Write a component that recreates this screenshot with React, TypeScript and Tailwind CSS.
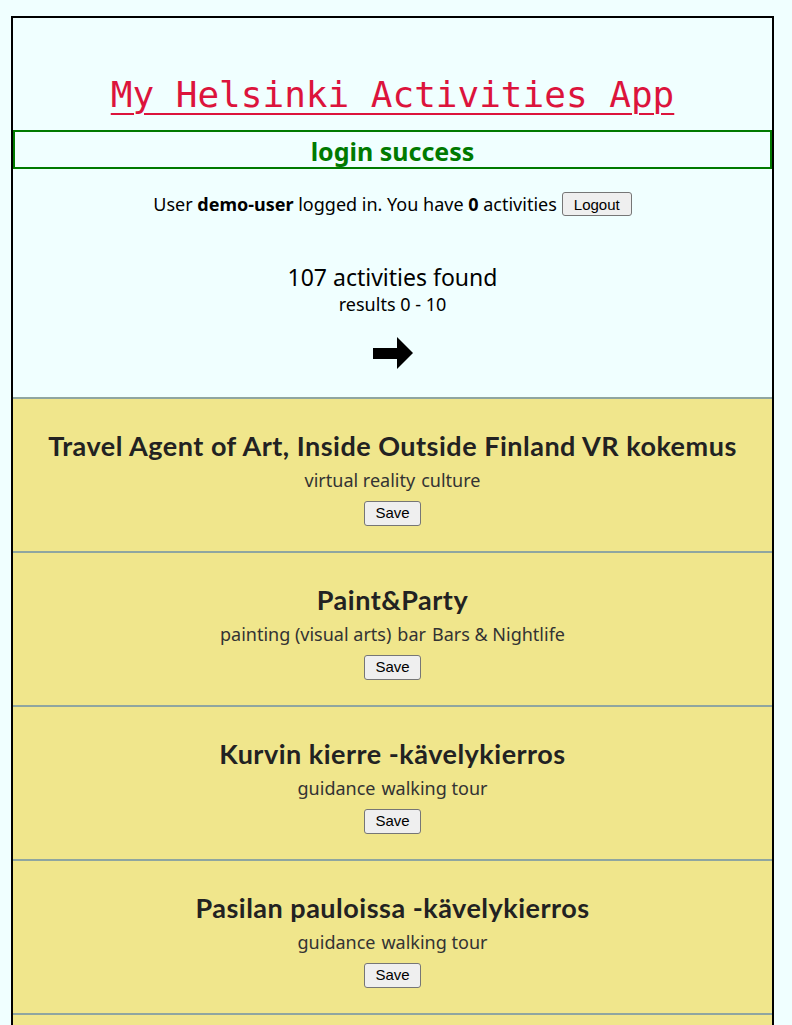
const activities = [
  { name: "Travel Agent of Art, Inside Outside Finland VR kokemus", tags: ["virtual reality", "culture"] },
  { name: "Paint&Party", tags: ["painting (visual arts)", "bar", "Bars & Nightlife"] },
  { name: "Kurvin kierre -kävelykierros", tags: ["guidance", "walking tour"] },
  { name: "Pasilan pauloissa -kävelykierros", tags: ["guidance", "walking tour"] },
  { name: "Helsinki Design Week", tags: ["design", "culture"] },
];

const ActivityCard = ({ name, tags }: { name: string; tags: string[] }) => (
  <div className="flex flex-col items-center border-t-2 border-[#8fa6a0] bg-[#f0e68c] pt-[30px] pb-[25px] text-[#222]">
    <h2 className="mb-[5px] font-['Lato',sans-serif] text-[27px] font-bold leading-[34px] tracking-[0.5px]">
      {name}
    </h2>
    <div className="flex gap-[6px] font-['Noto_Sans',sans-serif] text-[18px] leading-[24px] text-[#333]">
      {tags.map((tag) => (
        <span key={tag}>{tag}</span>
      ))}
    </div>
    <button className="mt-[9px] h-[25px] rounded-[3px] border border-[#767676] bg-[#efefef] px-[10px] font-['Liberation_Sans',sans-serif] text-[15px] text-black">
      Save
    </button>
  </div>
);

export default function App() {
  return (
    <div className="h-[1025px] overflow-hidden bg-[#f0ffff] pt-4 pl-[11px]">
      <div className="flex w-[763px] flex-col border-2 border-b-0 border-black font-['Noto_Sans',sans-serif] text-black">
        <h1 className="mt-[56px] text-center font-['DejaVu_Sans_Mono',monospace] text-[36px] leading-[42px] text-[#dc143c] underline decoration-2 underline-offset-[6px]">
          My Helsinki Activities App
        </h1>
        <div className="mt-[14px] flex h-[39px] items-center justify-center border-2 border-[#007a00] pt-[3px] text-[25px] font-bold leading-[30px] text-[#007a00]">
          login success
        </div>
        <div className="mt-[23px] flex items-center justify-center gap-[5px] text-[18px] leading-[24px]">
          <span>
            User <b>demo-user</b> logged in. You have <b>0</b> activities
          </span>
          <button className="h-[24px] rounded-[3px] border border-[#767676] bg-[#efefef] px-[11px] font-['Liberation_Sans',sans-serif] text-[15px]">
            Logout
          </button>
        </div>
        <div className="mt-[46px] text-center text-[23px] leading-[30px]">107 activities found</div>
        <div className="text-center text-[18px] leading-[24px]">results 0 - 10</div>
        <div className="mt-[21px] mb-[28px] flex justify-center">
          <svg width="40" height="32" viewBox="0 0 40 32">
            <polygon points="0,11 24,11 24,0 40,16 24,32 24,22 0,22" fill="black" />
          </svg>
        </div>
        {activities.map((a) => (
          <ActivityCard key={a.name} name={a.name} tags={a.tags} />
        ))}
      </div>
    </div>
  );
}
